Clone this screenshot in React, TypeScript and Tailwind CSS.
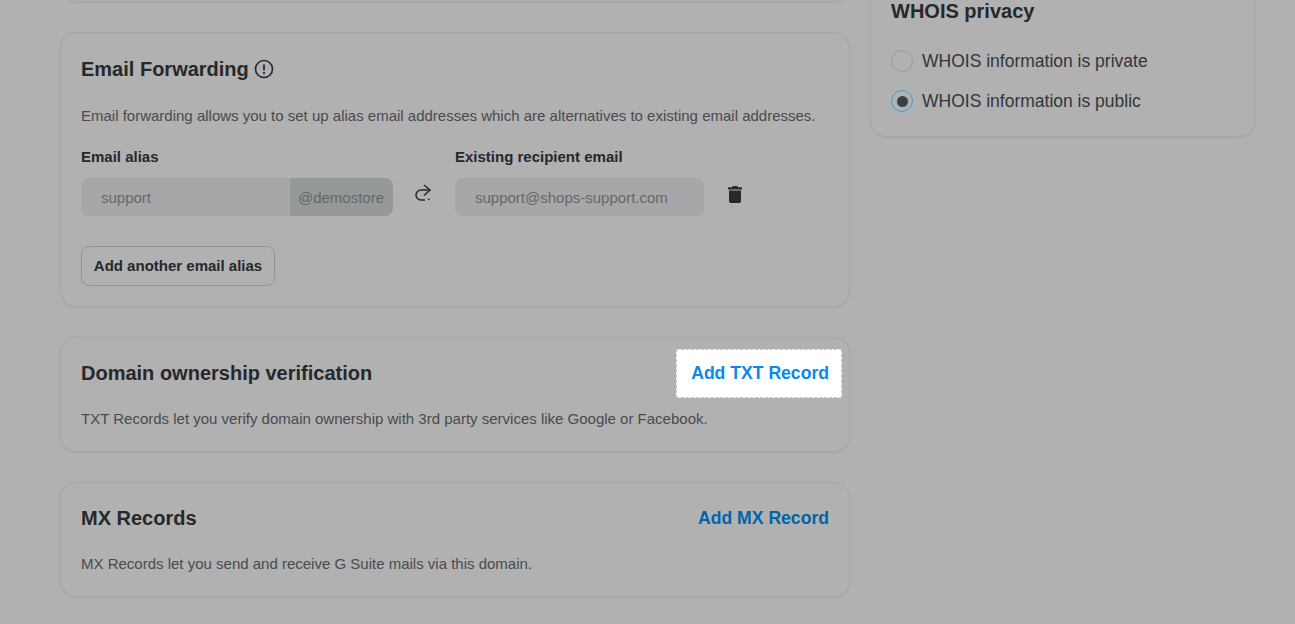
const font = { fontFamily: '"Liberation Sans", Arial, sans-serif' };

function CircleAlert() {
  return (
    <svg width="20" height="20" viewBox="0 0 20 20" fill="none" className="text-[#25282c]">
      <circle cx="10" cy="10" r="8.5" stroke="currentColor" strokeWidth="1.6" />
      <path d="M10 5.6v5.6" stroke="currentColor" strokeWidth="1.8" />
      <circle cx="10" cy="13.9" r="1.1" fill="currentColor" />
    </svg>
  );
}

function ForwardArrow() {
  return (
    <svg width="18" height="18" viewBox="0 0 18 18" fill="none" className="text-[#25282c]">
      <path d="M15 6H6a5 5 0 0 0 0 10h4" stroke="currentColor" strokeWidth="1.5" />
      <path d="M9 1l6 5-6 5.500" stroke="currentColor" strokeWidth="1.5" />
      <rect x="13" y="14.600" width="1.500" height="1.500" fill="currentColor" />
    </svg>
  );
}

function TrashIcon() {
  return (
    <svg width="14" height="17" viewBox="0 0 14 17" className="text-[#25282c]" fill="currentColor">
      <path d="M4.800 0h4.400l.7 1.300h3.600a.5.5 0 0 1 .5.5v1.700H0V1.800a.5.5 0 0 1 .5-.5h3.600zM1 4.500h12v10.800a1.700 1.700 0 0 1-1.700 1.700H2.700A1.700 1.700 0 0 1 1 15.300z" />
    </svg>
  );
}

function RecordCard({ title, desc, action, active }: { title: string; desc: string; action: string; active?: boolean }) {
  return (
    <section className="h-[115px] rounded-2xl border border-[#a5a6a9] px-[20px] shadow-[0_1px_2px_rgba(0,0,0,0.06)]">
      <div className="flex h-[70px] items-center justify-between">
        <h2 className="text-[20px] font-bold text-[#25282c]">{title}</h2>
        {active ? (
          <span className="-mr-[13px] flex h-[49px] w-[166px] items-center justify-end border border-dashed border-[#c6c6c6] bg-white pr-[12px] text-[17.6px] font-bold text-[#0a8ae6]">
            {action}
          </span>
        ) : (
          <span className="text-[17.6px] font-bold text-[#0064a8]">{action}</span>
        )}
      </div>
      <p className="text-[15px] text-[#494b4e]">{desc}</p>
    </section>
  );
}

export default function App() {
  return (
    <div className="flex h-[624px] w-[1295px] gap-5 overflow-hidden bg-[#b1b1b1] pl-[60px]" style={font}>
      <main className="flex w-[790px] flex-col gap-[30px]">
        <div className="-mt-[38px] h-[40px] rounded-2xl border border-[#a5a6a9] shadow-[0_1px_2px_rgba(0,0,0,0.06)]" />

        <section className="h-[275px] rounded-2xl border border-[#a5a6a9] px-[20px] pt-[21px] shadow-[0_1px_2px_rgba(0,0,0,0.06)]">
          <div className="flex items-center gap-[5px]">
            <h2 className="text-[20px] font-bold text-[#25282c]">Email Forwarding</h2>
            <CircleAlert />
          </div>
          <p className="mt-[21px] text-[15px] text-[#494b4e]">
            Email forwarding allows you to set up alias email addresses which are alternatives to existing email addresses.
          </p>
          <div className="mt-[18px] flex">
            <div className="w-[312px]">
              <label className="block text-[15px] font-bold text-[#25282c]">Email alias</label>
              <div className="mt-[10px] flex h-[38px] w-[312px] overflow-hidden rounded-lg bg-[#a5a7a9] text-[15px]">
                <span className="flex flex-1 items-center pl-5 pt-[2px] text-[#656769]">support</span>
                <span className="flex w-[103px] items-center justify-center bg-[#959999] pr-[1px] pt-[2px] text-[#656769]">@demostore</span>
              </div>
            </div>
            <div className="mt-[38px] flex w-[62px] justify-center">
              <ForwardArrow />
            </div>
            <div className="w-[249px]">
              <label className="block text-[15px] font-bold text-[#25282c]">Existing recipient email</label>
              <div className="mt-[10px] flex h-[38px] items-center rounded-lg bg-[#a5a7a9] pl-5 pt-[2px] text-[15px] text-[#656769]">
                support@shops-support.com
              </div>
            </div>
            <div className="ml-[24px] mt-[40px]">
              <TrashIcon />
            </div>
          </div>
          <button className="mt-[30px] h-[40px] w-[194px] rounded-lg border border-[#949597] text-[15px] font-bold text-[#25282c]">
            Add another email alias
          </button>
        </section>

        <RecordCard
          title="Domain ownership verification"
          desc="TXT Records let you verify domain ownership with 3rd party services like Google or Facebook."
          action="Add TXT Record"
          active
        />
        <RecordCard
          title="MX Records"
          desc="MX Records let you send and receive G Suite mails via this domain."
          action="Add MX Record"
        />
      </main>

      <aside className="w-[385px]">
        <section className="-mt-[20px] h-[157px] rounded-2xl border border-[#a5a6a9] px-[20px] pt-[15px] shadow-[0_1px_2px_rgba(0,0,0,0.06)]">
          <h2 className="text-[20px] font-bold text-[#25282c]">WHOIS privacy</h2>
          <div className="mt-[24px] flex flex-col gap-[18px]">
            <label className="flex h-[22px] items-center gap-[9px] text-[17.5px] text-[#33363a]">
              <span className="h-[22px] w-[22px] rounded-full border border-[#9a9b9d]" />
              WHOIS information is private
            </label>
            <label className="flex h-[22px] items-center gap-[9px] text-[17.5px] text-[#33363a]">
              <span className="flex h-[22px] w-[22px] items-center justify-center rounded-full border border-[#4f95c4] shadow-[0_0_2px_1px_#9dbdd3]">
                <span className="h-[11px] w-[11px] rounded-full bg-[#3a3e47]" />
              </span>
              WHOIS information is public
            </label>
          </div>
        </section>
      </aside>
    </div>
  );
}
